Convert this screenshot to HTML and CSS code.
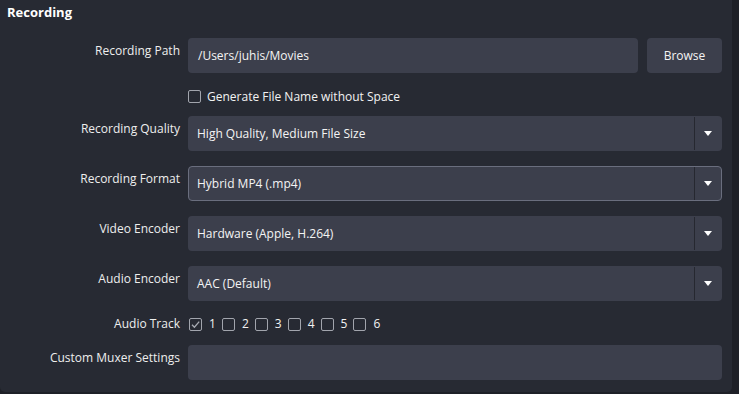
FILE: index.html
```html
<!DOCTYPE html>
<html>
<head>
<meta charset="utf-8">
<link rel="stylesheet" href="styles.css">
</head>
<body>
<div class="panel">
  <div class="title">Recording</div>
  <div class="form">
    <div class="row">
      <div class="label">Recording Path</div>
      <div class="field split">
        <div class="input grow">/Users/juhis/Movies</div>
        <div class="button">Browse</div>
      </div>
    </div>
    <div class="row check-row">
      <div class="label"></div>
      <div class="field">
        <label class="check"><span class="box"></span><span>Generate File Name without Space</span></label>
      </div>
    </div>
    <div class="row">
      <div class="label">Recording Quality</div>
      <div class="field"><div class="select"><span class="value">High Quality, Medium File Size</span><span class="arrow"></span></div></div>
    </div>
    <div class="row">
      <div class="label">Recording Format</div>
      <div class="field"><div class="select focused"><span class="value">Hybrid MP4 (.mp4)</span><span class="arrow"></span></div></div>
    </div>
    <div class="row">
      <div class="label">Video Encoder</div>
      <div class="field"><div class="select"><span class="value">Hardware (Apple, H.264)</span><span class="arrow"></span></div></div>
    </div>
    <div class="row">
      <div class="label">Audio Encoder</div>
      <div class="field"><div class="select"><span class="value">AAC (Default)</span><span class="arrow"></span></div></div>
    </div>
    <div class="row track-row">
      <div class="label">Audio Track</div>
      <div class="field tracks">
        <label class="check"><span class="box checked"><svg viewBox="0 0 13 13" width="13" height="13"><path d="M3 6.8 L5.4 9.2 L10.2 3.6" fill="none" stroke="#a9acb4" stroke-width="1.3"/></svg></span><span>1</span></label>
        <label class="check"><span class="box"></span><span>2</span></label>
        <label class="check"><span class="box"></span><span>3</span></label>
        <label class="check"><span class="box"></span><span>4</span></label>
        <label class="check"><span class="box"></span><span>5</span></label>
        <label class="check"><span class="box"></span><span>6</span></label>
      </div>
    </div>
    <div class="row">
      <div class="label">Custom Muxer Settings</div>
      <div class="field"><div class="input"></div></div>
    </div>
  </div>
</div>
</body>
</html>
```
FILE: styles.css
```css
html, body {
  margin: 0;
  padding: 0;
  background: #1e2027;
  height: 394px;
  overflow: hidden;
}
body {
  font-family: "Open Sans", "Liberation Sans", sans-serif;
  font-size: 12px;
  color: #f2f2f2;
}
.panel {
  width: 732px;
  height: 392px;
  background: #272a33;
  border-radius: 0 0 5px 5px;
  box-sizing: border-box;
  padding: 3px 10px 0 0;
}
.title {
  font-weight: bold;
  font-size: 13px;
  padding-left: 7px;
  height: 35px;
  line-height: 18px;
  color: #ffffff;
}
.form {
  display: flex;
  flex-direction: column;
}
.row {
  display: grid;
  grid-template-columns: 180px 1fr;
  column-gap: 8px;
  margin-bottom: 15px;
}
.label {
  text-align: right;
  padding-top: 4px;
  line-height: 18px;
  color: #eeeeee;
}
.field { min-width: 0; }
.split {
  display: flex;
  gap: 9px;
}
.grow { flex: 1; }
.input, .select, .button {
  height: 35px;
  box-sizing: border-box;
  background: #3c3f4c;
  border-radius: 4px;
  line-height: 35px;
  padding-left: 10px;
  color: #f4f4f4;
}
.button {
  width: 75px;
  padding: 0;
  text-align: center;
}
.select {
  display: flex;
  padding: 0;
  border: 1px solid transparent;
  line-height: 33px;
}
.select.focused { border-color: #6a6e7e; }
.select .value {
  flex: 1;
  padding-left: 8px;
  border-right: 1px solid #262830;
}
.select .arrow {
  width: 26px;
  position: relative;
}
.select .arrow::after {
  content: "";
  position: absolute;
  left: 9px;
  top: 14px;
  border-left: 4.5px solid transparent;
  border-right: 4.5px solid transparent;
  border-top: 5px solid #ffffff;
}
.check-row { margin-top: -1.5px; margin-bottom: 9px; }
.check {
  display: inline-flex;
  align-items: center;
  gap: 6px;
  height: 20px;
  line-height: 20px;
}
.box {
  width: 13px;
  height: 13px;
  box-sizing: border-box;
  border: 1px solid #a2a5ad;
  border-radius: 2px;
  display: inline-block;
  position: relative;
}
.box svg { position: absolute; left: -1px; top: -1px; }
.track-row { margin-top: -2px; margin-bottom: 11px; }
.track-row .label { padding-top: 0; line-height: 20px; }
.tracks {
  display: flex;
  gap: 6px;
  padding-left: 1px;
}
.tracks .check { gap: 7px; }
```
